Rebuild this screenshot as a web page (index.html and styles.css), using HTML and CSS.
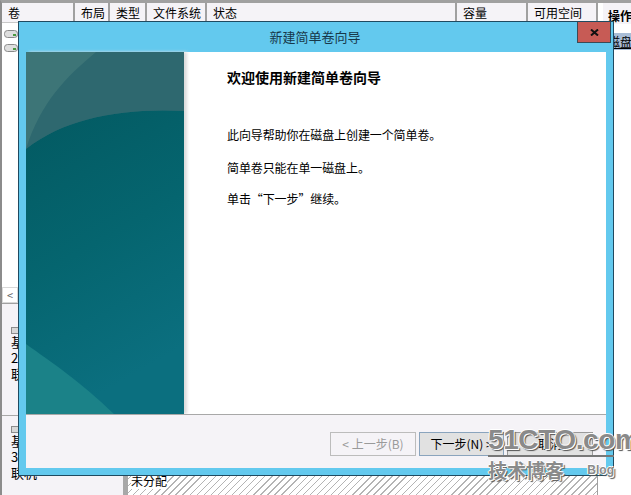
FILE: index.html
```html
<!DOCTYPE html>
<html lang="zh-CN">
<head>
<meta charset="utf-8">
<title>新建简单卷向导</title>
<link rel="stylesheet" href="styles.css">
</head>
<body>
<div class="app">
  <div class="main">
    <div class="table-head">
      <div class="th c-vol">卷</div>
      <div class="th c-layout">布局</div>
      <div class="th c-type">类型</div>
      <div class="th c-fs">文件系统</div>
      <div class="th c-status">状态</div>
      <div class="th c-cap">容量</div>
      <div class="th c-free">可用空间</div>
    </div>
    <div class="table-body">
      <div class="vol-row"><svg class="drive" viewBox="0 0 14 8"><rect x=".5" y=".5" width="13" height="7" rx="3" fill="#dedede" stroke="#8a8a8a"/><rect x="9" y="4" width="3" height="2" fill="#4a9a40"/></svg></div>
      <div class="vol-row"><svg class="drive" viewBox="0 0 14 8"><rect x=".5" y=".5" width="13" height="7" rx="3" fill="#dedede" stroke="#8a8a8a"/><rect x="9" y="4" width="3" height="2" fill="#4a9a40"/></svg></div>
    </div>
    <div class="hscroll"><div class="arrow">&lt;</div></div>
    <div class="disks">
      <div class="disk disk-a">
        <div class="disk-info">
          <svg class="disk-icon" viewBox="0 0 8 8"><rect x=".5" y="1.5" width="7" height="6" fill="#d8d8d8" stroke="#8c8c8c"/></svg>
          <div>基本</div><div>2</div><div>联机</div>
        </div>
      </div>
      <div class="disk disk-b">
        <div class="disk-info">
          <svg class="disk-icon" viewBox="0 0 8 8"><rect x=".5" y="1.5" width="7" height="6" fill="#d8d8d8" stroke="#8c8c8c"/></svg>
          <div>基本</div><div>3</div><div>联机</div>
        </div>
        <div class="partition"><span class="part-label">未分配</span></div>
      </div>
    </div>
  </div>
  <aside class="actions">
    <div class="act-head">操作</div>
    <div class="act-item">磁盘管理</div>
  </aside>
</div>

<section class="wizard">
  <header class="titlebar">
    <span class="title">新建简单卷向导</span>
    <button class="close" type="button">
      <svg viewBox="0 0 9 7" width="9" height="7"><path d="M1 0.5 L8 6.5 M8 0.5 L1 6.5" stroke="#111" stroke-width="2" fill="none"/></svg>
    </button>
  </header>
  <div class="client">
    <div class="content">
      <div class="banner">
        <svg class="banner-art" viewBox="0 0 158 362" preserveAspectRatio="none">
          <defs>
            <linearGradient id="bg" x1="0" y1="0" x2="0.25" y2="1">
              <stop offset="0" stop-color="#41767a"/>
              <stop offset=".16" stop-color="#2f6a70"/>
              <stop offset=".17" stop-color="#035a62"/>
              <stop offset=".6" stop-color="#05656f"/>
              <stop offset="1" stop-color="#0b6f7f"/>
            </linearGradient>
          </defs>
          <rect width="158" height="362" fill="url(#bg)"/>
          <path d="M0 38 Q0 0 0 0 H158 V59 C95 56 40 66 0 97 Z" fill="#3b7276"/>
          <path d="M0 0 H158 V59 C95 56 40 66 0 97 Z" fill="#1f5e68" opacity=".45"/>
          <path d="M0 0 H70 C40 25 15 50 0 97 Z" fill="#4f8480" opacity=".45"/>
          <path d="M0 292 C25 310 55 330 88 362 H0 Z" fill="#1b8288"/>
        </svg>
      </div>
      <div class="copy">
        <h1 class="heading">欢迎使用新建简单卷向导</h1>
        <p class="line first">此向导帮助你在磁盘上创建一个简单卷。</p>
        <p class="line">简单卷只能在单一磁盘上。</p>
        <p class="line">单击“下一步”继续。</p>
      </div>
    </div>
    <footer class="footer">
      <button class="btn btn-off" type="button">&lt; 上一步(B)</button>
      <button class="btn btn-next" type="button">下一步(N) &gt;</button>
      <button class="btn btn-cancel" type="button">取消</button>
    </footer>
  </div>
</section>

<div class="watermark">
  <div class="wm-logo">51CTO.com</div>
  <div class="wm-sub"><span class="wm-cn">技术博客</span><span class="wm-blog">Blog</span></div>
</div>
</body>
</html>
```
FILE: styles.css
```css
* { box-sizing: border-box; }
html, body { margin: 0; height: 100%; }
body {
  width: 631px;
  height: 495px;
  overflow: hidden;
  background: #fff;
  color: #000;
  font-family: "Noto Sans CJK SC", "Liberation Sans", sans-serif;
  font-size: 12px;
  line-height: 16px;
}
.app {
  display: flex;
  gap: 5px;
  height: 495px;
  border-top: 3px solid #a0a0a0;
  border-left: 2px solid #8c8c8c;
}
.main {
  width: 596px;
  display: flex;
  flex-direction: column;
  border-right: 1px solid #a0a0a0;
}
.table-head {
  display: flex;
  height: 20px;
  background: #f5f3f7;
  border-bottom: 1px solid #c8c8c8;
  flex: none;
}
.th {
  padding: 2px 0 0 6px;
  border-right: 2px solid #a0a0a0;
  flex: none;
}
.c-vol { width: 73px; }
.c-layout { width: 35px; }
.c-type { width: 37px; }
.c-fs { width: 60px; }
.c-status { width: 250px; }
.c-cap { width: 71px; }
.c-free { width: 70px; }
.table-body {
  height: 264px;
  padding-top: 7px;
  display: flex;
  flex-direction: column;
  gap: 6px;
  flex: none;
}
.vol-row { height: 8px; padding-left: 2px; display: flex; }
.drive { width: 14px; height: 8px; }
.hscroll {
  height: 17px;
  background: #f5f3f7;
  flex: none;
  border-bottom: 1px solid #a0a0a0;
}
.arrow {
  width: 16px;
  height: 16px;
  background: #fff;
  border: 1px solid #d8d8d8;
  text-align: center;
  color: #666;
  font-size: 11px;
  line-height: 14px;
}
.disks { flex: 1; display: flex; flex-direction: column; background: #f5f3f7; padding-top: 13px; }
.disk { display: flex; }
.disk-a { height: 99px; border-bottom: 1px solid #a8a8a8; }
.disk-b { flex: 1; }
.disk-info { width: 118px; padding: 9px 0 0 9px; font-size: 13px; line-height: 16px; flex: none; }
.disk-icon { display: block; width: 8px; height: 8px; }
.partition {
  flex: 1;
  margin-left: 3px;
  border-left: 5px solid #a8a8a8;
  background: repeating-linear-gradient(135deg, #fff 0 4px, #b4b4b4 4px 5px);
  padding: 57px 0 0 3px;
}
.part-label { background: #fff; }
.actions { width: 28px; flex: none; overflow: hidden; }
.act-head {
  height: 21px;
  background: #f5f3f7;
  font-weight: bold;
  padding: 5px 0 0 5px;
  white-space: nowrap;
}
.act-item {
  height: 17px;
  margin-top: 9px;
  background: #a9bdd6;
  padding-left: 5px;
  white-space: nowrap;
  line-height: 17px;
  text-decoration: underline;
}
.wizard {
  position: absolute;
  left: 18px;
  top: 21px;
  width: 596px;
  height: 455px;
  background: #63c9ee;
  border: 1px solid #1f4a60;
  display: flex;
  flex-direction: column;
  padding: 0 7px 7px;
}
.titlebar {
  height: 30px;
  flex: none;
  display: flex;
  justify-content: center;
  align-items: center;
  position: relative;
}
.title { color: #17384a; font-size: 13px; padding-right: 2px; }
.close {
  position: absolute;
  right: -5px;
  top: 0;
  width: 34px;
  height: 21px;
  background: #c75b55;
  border: 1px solid #3d4a55;
  border-top: 0;
  padding: 0;
  display: flex;
  align-items: center;
  justify-content: center;
}
.client {
  flex: 1;
  display: flex;
  flex-direction: column;
  background: #fff;
  min-height: 0;
}
.content { flex: 1; display: flex; min-height: 0; }
.banner { width: 158px; flex: none; box-shadow: 3px 0 3px #dcdcdc; }
.banner-art { display: block; width: 158px; height: 100%; }
.copy { padding: 16px 0 0 43px; flex: 1; }
.heading { margin: 0 0 41px; font-size: 14px; font-weight: bold; line-height: 18px; }
.line { margin: 0 0 15px; font-size: 12px; line-height: 16px; letter-spacing: -.1px; }
.line.first { margin-bottom: 17px; }
.footer {
  height: 54px;
  flex: none;
  background: #f5f3f7;
  border-top: 1px solid #a8a8a8;
  display: flex;
  justify-content: flex-end;
  gap: 3px;
  padding: 17px 0 0 0;
}
.btn {
  height: 24px;
  width: 85px;
  font: inherit;
  padding: 0;
  background: #e1e1e1;
  border: 1px solid #8aa4bd;
}
.btn-off { background: #f5f3f7; border-color: #bcbcbc; color: #9a9a9a; width: 86px; }
.btn-next { width: 85px; margin-right: 0; }
.btn-cancel { width: 86px; margin-right: 13px; border-color: #9a9a9a; }
.watermark {
  position: absolute;
  left: 488px;
  top: 424px;
  width: 126px;
  color: #8a8a8a;
  text-shadow: 1px 1px 0 #fff, -1px 0 0 #fff, 0 -1px 0 #fff, 2px 2px 1px #555;
}
.wm-logo {
  font-family: "Liberation Sans", sans-serif;
  font-weight: bold;
  font-size: 28px;
  line-height: 31px;
  letter-spacing: -.4px;
  transform-origin: left top;
  white-space: nowrap;
  border-bottom: 2px solid #777;
}
.wm-sub { display: flex; justify-content: space-between; align-items: center; margin-top: 2px; }
.wm-cn { font-size: 19px; font-weight: bold; line-height: 22px; }
.wm-blog { font-family: "Liberation Sans", sans-serif; font-size: 12px; font-weight: bold; }
</style>
```
